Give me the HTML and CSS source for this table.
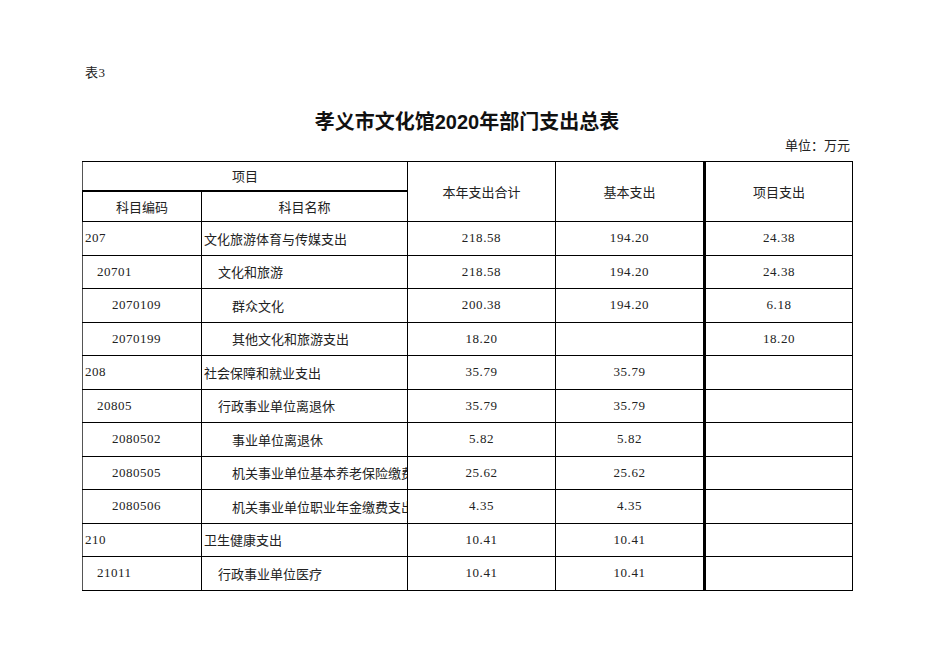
FILE: index.html
```html
<!DOCTYPE html>
<html lang="zh-CN">
<head>
<meta charset="utf-8">
<title>孝义市文化馆2020年部门支出总表</title>
<link rel="stylesheet" href="styles.css">
</head>
<body>
<div class="page">
  <div class="note">表3</div>
  <h1 class="title">孝义市文化馆2020年部门支出总表</h1>
  <div class="unit">单位：万元</div>
  <table class="sheet">
    <colgroup>
      <col class="c1"><col class="c2"><col class="c3"><col class="c4"><col class="c5">
    </colgroup>
    <thead>
      <tr class="h1">
        <th colspan="2" class="thick-b">项目</th>
        <th rowspan="2">本年支出合计</th>
        <th rowspan="2" class="thick-r">基本支出</th>
        <th rowspan="2">项目支出</th>
      </tr>
      <tr class="h2">
        <th>科目编码</th>
        <th>科目名称</th>
      </tr>
    </thead>
    <tbody>
      <tr class="r"><td class="code l1">207</td><td class="name l1">文化旅游体育与传媒支出</td><td class="num">218.58</td><td class="num thick-r">194.20</td><td class="num">24.38</td></tr>
      <tr class="r"><td class="code l2">20701</td><td class="name l2">文化和旅游</td><td class="num">218.58</td><td class="num thick-r">194.20</td><td class="num">24.38</td></tr>
      <tr class="r"><td class="code l3">2070109</td><td class="name l3">群众文化</td><td class="num">200.38</td><td class="num thick-r">194.20</td><td class="num">6.18</td></tr>
      <tr class="r"><td class="code l3">2070199</td><td class="name l3">其他文化和旅游支出</td><td class="num">18.20</td><td class="num thick-r"></td><td class="num">18.20</td></tr>
      <tr class="r"><td class="code l1">208</td><td class="name l1">社会保障和就业支出</td><td class="num">35.79</td><td class="num thick-r">35.79</td><td class="num"></td></tr>
      <tr class="r"><td class="code l2">20805</td><td class="name l2">行政事业单位离退休</td><td class="num">35.79</td><td class="num thick-r">35.79</td><td class="num"></td></tr>
      <tr class="r"><td class="code l3">2080502</td><td class="name l3">事业单位离退休</td><td class="num">5.82</td><td class="num thick-r">5.82</td><td class="num"></td></tr>
      <tr class="r"><td class="code l3">2080505</td><td class="name l3">机关事业单位基本养老保险缴费支出</td><td class="num">25.62</td><td class="num thick-r">25.62</td><td class="num"></td></tr>
      <tr class="r"><td class="code l3">2080506</td><td class="name l3">机关事业单位职业年金缴费支出</td><td class="num">4.35</td><td class="num thick-r">4.35</td><td class="num"></td></tr>
      <tr class="r"><td class="code l1">210</td><td class="name l1">卫生健康支出</td><td class="num">10.41</td><td class="num thick-r">10.41</td><td class="num"></td></tr>
      <tr class="r"><td class="code l2">21011</td><td class="name l2">行政事业单位医疗</td><td class="num">10.41</td><td class="num thick-r">10.41</td><td class="num"></td></tr>
    </tbody>
  </table>
</div>
</body>
</html>
```
FILE: styles.css
```css
html, body {
  margin: 0;
  padding: 0;
  background: #fff;
}
body {
  font-family: "Liberation Serif", "Noto Sans CJK SC", serif;
  color: #222;
  font-size: 13px;
}
.page {
  width: 770px;
  padding: 64px 0 0 82px;
}
.note {
  height: 18px;
  line-height: 18px;
  padding-left: 3px;
  letter-spacing: 0.5px;
}
.title {
  margin: 28px 0 0 0;
  height: 24px;
  line-height: 24px;
  font-size: 20px;
  font-weight: bold;
  text-align: center;
  color: #111;
  font-family: "Liberation Sans", "Noto Sans CJK SC", sans-serif;
}
.unit {
  margin-top: 4px;
  height: 16px;
  line-height: 16px;
  text-align: right;
  padding-right: 2px;
  margin-bottom: 7px;
}
.sheet {
  border-collapse: collapse;
  table-layout: fixed;
  width: 770px;
}
.c1 { width: 119px; }
.c2 { width: 206px; }
.c3 { width: 148px; }
.c4 { width: 149px; }
.c5 { width: 148px; }
.sheet th, .sheet td {
  border: 1px solid #000;
  padding: 0;
  font-weight: normal;
  white-space: nowrap;
  overflow: hidden;
  vertical-align: middle;
}
.sheet th {
  text-align: center;
}
.sheet tr:first-child th:first-child,
.sheet td:first-child {
  border-left-color: #555;
}
.h1 { height: 29px; }
.h2 { height: 31px; }
.thick-b { border-bottom-width: 2px !important; }
.thick-r { border-right-width: 3px !important; }
.r { height: 33.5px; }
.num {
  text-align: center;
  letter-spacing: 0.6px;
}
.code { text-align: left; letter-spacing: 0.5px; }
.name { text-align: left; text-overflow: clip; }
.code.l1, .name.l1 { padding-left: 2px; }
.code.l2 { padding-left: 14px; }
.code.l3 { padding-left: 29px; }
.name.l2 { padding-left: 16px; }
.name.l3 { padding-left: 30px; }
```
